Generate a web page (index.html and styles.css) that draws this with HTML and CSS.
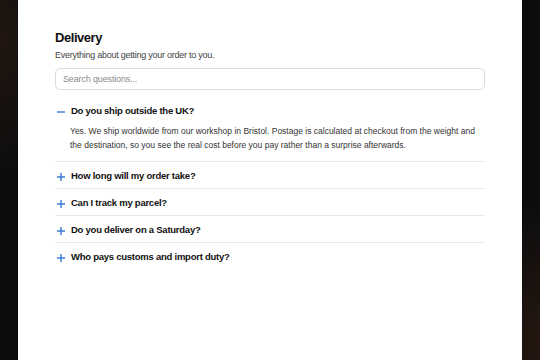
FILE: index.html
```html
<!DOCTYPE html>
<html lang="en">
<head>
<meta charset="utf-8">
<title>Delivery FAQ</title>
<link rel="stylesheet" href="styles.css">
</head>
<body>
<main class="panel">
  <h1 class="title">Delivery</h1>
  <p class="subtitle">Everything about getting your order to you.</p>
  <input class="search" type="text" placeholder="Search questions...">
  <ul class="faq">
    <li class="item open">
      <div class="question">
        <svg class="icon" viewBox="0 0 10 10" width="10" height="10"><path d="M1 5H9"/></svg>
        <span>Do you ship outside the UK?</span>
      </div>
      <p class="answer">Yes. We ship worldwide from our workshop in Bristol. Postage is calculated at checkout from the weight and the destination, so you see the real cost before you pay rather than a surprise afterwards.</p>
    </li>
    <li class="item">
      <div class="question">
        <svg class="icon" viewBox="0 0 10 10" width="10" height="10"><path d="M1 5H9M5 1V9"/></svg>
        <span>How long will my order take?</span>
      </div>
    </li>
    <li class="item">
      <div class="question">
        <svg class="icon" viewBox="0 0 10 10" width="10" height="10"><path d="M1 5H9M5 1V9"/></svg>
        <span>Can I track my parcel?</span>
      </div>
    </li>
    <li class="item">
      <div class="question">
        <svg class="icon" viewBox="0 0 10 10" width="10" height="10"><path d="M1 5H9M5 1V9"/></svg>
        <span>Do you deliver on a Saturday?</span>
      </div>
    </li>
    <li class="item last">
      <div class="question">
        <svg class="icon" viewBox="0 0 10 10" width="10" height="10"><path d="M1 5H9M5 1V9"/></svg>
        <span>Who pays customs and import duty?</span>
      </div>
    </li>
  </ul>
</main>
</body>
</html>
```
FILE: styles.css
```css
html, body {
  margin: 0;
  padding: 0;
  height: 100%;
}
body {
  background:
    radial-gradient(ellipse 60px 140px at 0 40px, #21160f 0%, rgba(33,22,15,0) 100%),
    radial-gradient(ellipse 60px 140px at 100% 340px, #25170f 0%, rgba(37,23,15,0) 100%),
    #0c0c0e;
  font-family: "Liberation Sans", Arial, sans-serif;
  color: #111;
}
.panel {
  box-sizing: border-box;
  width: 504px;
  min-height: 360px;
  margin: 0 auto;
  background: #fff;
  padding: 30px 37px 20px;
}
.title {
  margin: 0;
  font-size: 13px;
  line-height: 16px;
  letter-spacing: -0.45px;
  font-weight: 700;
  color: #111;
}
.subtitle {
  margin: 2px 0 0;
  font-size: 9px;
  line-height: 14px;
  letter-spacing: -0.25px;
  color: #444;
}
.search {
  display: block;
  box-sizing: border-box;
  width: 100%;
  height: 22px;
  margin-top: 6px;
  padding: 0 7px;
  border: 1px solid #dcdcdc;
  border-radius: 5px;
  font-family: inherit;
  font-size: 9px;
  letter-spacing: -0.15px;
  color: #333;
  outline: none;
}
.search::placeholder {
  color: #8a8a8a;
}
.faq {
  list-style: none;
  margin: 7px 0 0;
  padding: 0;
}
.item {
  border-bottom: 1px solid #e8e8e8;
}
.item.last {
  border-bottom: none;
}
.question {
  display: flex;
  align-items: center;
  gap: 5px;
  padding: 7px 0 6px;
  font-size: 9.5px;
  line-height: 13px;
  letter-spacing: -0.25px;
  font-weight: 700;
  color: #111;
}
.icon {
  flex: none;
  margin-left: 1px;
  margin-top: 3px;
  stroke: #3b7bd6;
  stroke-width: 1.4;
  fill: none;
}
.answer {
  margin: 1px 0 0 15px;
  padding: 0 5px 9px 0;
  font-size: 8.5px;
  line-height: 14px;
  color: #333;
}
```
